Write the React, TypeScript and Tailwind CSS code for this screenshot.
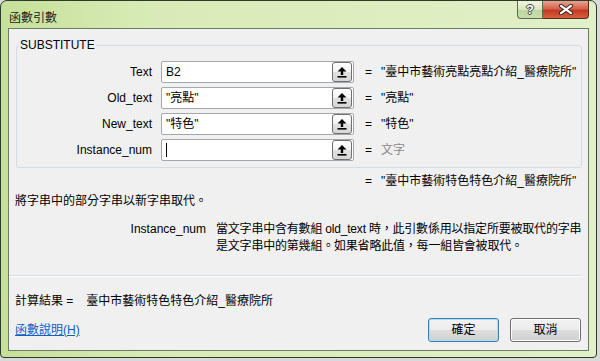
const rows = [
  { label: "Text", value: "B2", result: "\"臺中市藝術亮點亮點介紹_醫療院所\"" },
  { label: "Old_text", value: "\"亮點\"", result: "\"亮點\"" },
  { label: "New_text", value: "\"特色\"", result: "\"特色\"" },
  { label: "Instance_num", value: "", result: "文字", caret: true, muted: true },
];

function RefButton() {
  return (
    <div className="w-[20px] h-[20px] mr-[1px] rounded-[3px] border border-[#707070] bg-[linear-gradient(to_bottom,#ffffff_0%,#f3f3f3_50%,#e2e2e2_51%,#d6d6d6_100%)] flex items-center justify-center">
      <svg width="10" height="11" viewBox="0 0 10 11">
        <path d="M5 0 L9.5 4.5 H6.2 V8 H3.8 V4.5 H0.5 Z" fill="#000" />
        <rect x="0.5" y="9" width="9" height="1.6" fill="#000" />
      </svg>
    </div>
  );
}

function ArgRow({ label, value, result, caret, muted }: { label: string; value: string; result: string; caret?: boolean; muted?: boolean }) {
  return (
    <div className="flex items-center h-[22px]">
      <span className="w-[135px] text-right">{label}</span>
      <div className="ml-[9px] w-[193px] h-[22px] border border-[#a3a8ae] rounded-[2px] bg-white flex items-center">
        <div className="flex-1 pl-[4px] flex items-center">
          {caret ? <span className="w-[1px] h-[14px] bg-black" /> : <span>{value}</span>}
        </div>
        <RefButton />
      </div>
      <span className="ml-[11px] w-[16px]">=</span>
      <span className={muted ? "text-[#8a8a8a]" : ""}>{result}</span>
    </div>
  );
}

export default function App() {
  return (
    <div className="w-[600px] h-[361px] bg-[#d9d9d9] font-['Liberation_Sans','Noto_Sans_CJK_TC',sans-serif] text-[12px] leading-[16px] text-black">
      <div className="w-[597px] h-[358px] rounded-t-[7px] rounded-b-[4px] border border-[#2e3a2a] bg-[linear-gradient(to_right,#c6e09a,#d8ebb6_25%,#e1f0c8)] flex flex-col px-[7px] pb-[6px]">
        {/* title bar */}
        <div className="h-[27px] flex items-start justify-between">
          <span className="mt-[9px] ml-[1px] text-[#1b1b1b]">函數引數</span>
          <div className="flex">
            <div className="w-[26px] h-[18px] border border-t-0 border-[#5d6b56] rounded-bl-[4px] bg-[linear-gradient(to_bottom,#eef6e0,#d7e8bf_50%,#bcd59c_51%,#c9dfae)] flex items-center justify-center">
              <span className="text-white font-bold text-[13px] leading-[14px] [text-shadow:1px_0_0_#404040,-1px_0_0_#404040,0_1px_0_#404040,0_-1px_0_#404040]">?</span>
            </div>
            <div className="w-[46px] h-[18px] border border-t-0 border-l-0 border-[#5a2a22] rounded-br-[4px] bg-[linear-gradient(to_bottom,#eaa292,#d4634b_45%,#c23a22_55%,#d5603f)] flex items-center justify-center">
              <svg width="16" height="11" viewBox="0 0 16 11">
                <path d="M3 1.8 L13 9.2 M13 1.8 L3 9.2" stroke="#3b2520" strokeWidth="4" strokeLinecap="round" />
                <path d="M3 1.8 L13 9.2 M13 1.8 L3 9.2" stroke="#ffffff" strokeWidth="2.2" strokeLinecap="round" />
              </svg>
            </div>
          </div>
        </div>

        {/* client area */}
        <div className="flex-1 bg-[#f0f0f0] border border-[#6f7d66] pl-[6px] pr-[6px] flex flex-col">
          <fieldset className="mt-[9px] ml-[1px] border border-[#d3dce3] rounded-[3px] px-0 pt-[9px] pb-[6px] flex flex-col gap-[4px]">
            <legend className="ml-[2px] px-[1px] leading-[14px]">SUBSTITUTE</legend>
            {rows.map((r) => (
              <ArgRow key={r.label} {...r} />
            ))}
          </fieldset>

          <div className="mt-[5px] flex">
            <span className="ml-[350px] w-[16px]">=</span>
            <span>"臺中市藝術特色特色介紹_醫療院所"</span>
          </div>

          <p className="mt-[4px]">將字串中的部分字串以新字串取代。</p>

          <div className="mt-[12px] flex leading-[17px] whitespace-nowrap">
            <span className="w-[191px] shrink-0 text-right">Instance_num</span>
            <p className="ml-[10px] tracking-[-0.2px]">
              當文字串中含有數組 old_text 時，此引數係用以指定所要被取代的字串
              <br />
              是文字串中的第幾組。如果省略此值，每一組皆會被取代。
            </p>
          </div>

          <div className="mt-[20px] -ml-[6px] mr-[1px] h-[2px] border-t border-[#d2dce4] border-b border-b-white" />

          <div className="mt-[16px] flex">
            <span>計算結果 =</span>
            <span className="ml-[13px]">臺中市藝術特色特色介紹_醫療院所</span>
          </div>

          <div className="mt-auto mb-[8px] flex items-center">
            <a href="#" className="text-[#0b5fc6] underline">函數說明(H)</a>
            <div className="ml-auto mr-[1px] flex gap-[11px]">
              <button className="w-[71px] h-[24px] rounded-[3px] border border-[#3c7fb1] shadow-[inset_0_0_0_1px_#a6e1fb] bg-[linear-gradient(to_bottom,#f4f4f4_0%,#ececec_50%,#dedede_51%,#d0d0d0_100%)]">確定</button>
              <button className="w-[71px] h-[24px] rounded-[3px] border border-[#707070] shadow-[inset_0_0_0_1px_#fcfcfc] bg-[linear-gradient(to_bottom,#f2f2f2_0%,#ebebeb_50%,#dddddd_51%,#cfcfcf_100%)]">取消</button>
            </div>
          </div>
        </div>
      </div>
    </div>
  );
}
